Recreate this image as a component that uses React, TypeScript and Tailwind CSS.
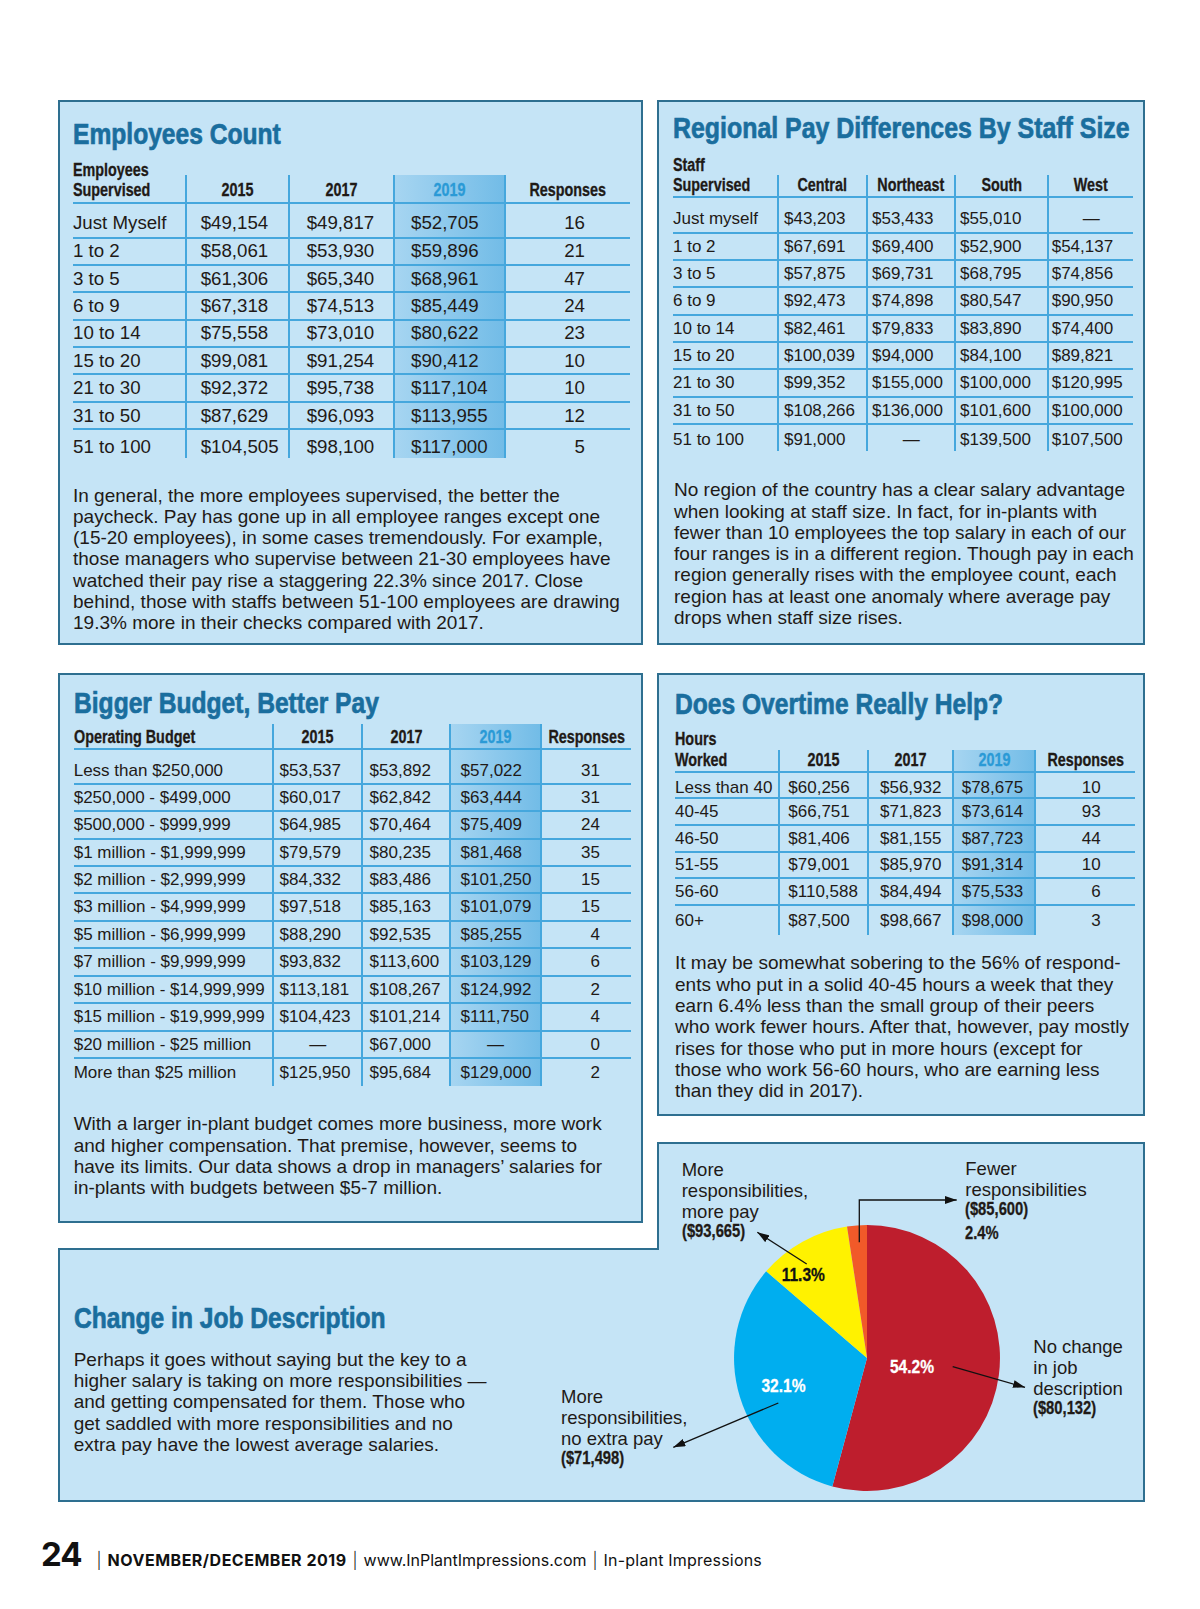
import React from 'react'

// Arial Narrow look: Liberation Sans Bold squeezed to 82%
const COND = 'inline-block scale-x-[0.82]'
const LINE = 'border-[#45a7dd]'
const HL = 'bg-linear-to-r from-[#a6d5f1] to-[#72bce7]'
const BOX = 'border-2 border-[#2e6f90] bg-[#c5e4f6]'
const TITLE = 'font-bold text-[30px] leading-[34px] text-[#1a6e9e] whitespace-nowrap overflow-hidden [-webkit-text-stroke:0.7px_currentColor]'
const PARA = 'text-[19px] leading-[21.3px] whitespace-nowrap'

interface TableSpec {
    widths: string[];
    pads: string[];
    aligns: string[];
    label: React.ReactNode;
    head: string[];
    headRow: string;
    headLabel: string;
    headCell: string;
    rows: string[][];
    hl: number;
    text: string;
    rowFirst: string;
    rowMid: string;
    rowLast: string;
    padFirst: string;
    padLast: string;
}

const Title = ({ children, sx = 'scale-x-[0.82]' }: { children: React.ReactNode; sx?: string }) => (
    <h2 className={TITLE}>
        <span className={`inline-block origin-left ${sx}`}>{children}</span>
    </h2>
)

const DataTable = ({ t }: { t: TableSpec }) => {
    return (
        <div className={t.text}>
            <div className={`flex items-end border-b-2 ${LINE} ${t.headRow}`}>
                <div className={`${t.widths[0]} ${t.headLabel} font-bold text-[17.5px] whitespace-nowrap [-webkit-text-stroke:0.3px_currentColor]`}>
                    <span className={`${COND} origin-left`}>{t.label}</span>
                </div>
                {t.head.map((h, i) => (
                    <div
                        key={h}
                        className={`${t.widths[i + 1]} ${t.headCell} border-l-2 ${LINE} ${i + 1 === t.hl ? `${HL} text-[#2a9ad6]` : ''} flex items-end justify-center font-bold text-[17.5px] whitespace-nowrap [-webkit-text-stroke:0.3px_currentColor]`}
                    >
                        <span className={COND}>{h}</span>
                    </div>
                ))}
            </div>
            {t.rows.map((r, ri) => {
                const first = ri === 0
                const last = ri === t.rows.length - 1
                return (
                    <div key={ri} className={`flex ${first ? t.rowFirst : last ? t.rowLast : t.rowMid} ${last ? '' : `border-b-2 ${LINE}`}`}>
                        {r.map((c, ci) => (
                            <div
                                key={ci}
                                className={`${t.widths[ci]} flex items-center whitespace-nowrap ${first ? t.padFirst : last ? t.padLast : ''} ${ci > 0 ? `border-l-2 ${LINE}` : ''} ${ci === t.hl ? HL : ''} ${c === '—' ? 'justify-center' : `${t.aligns[ci]} ${t.pads[ci]}`}`}
                            >
                                {c}
                            </div>
                        ))}
                    </div>
                )
            })}
        </div>
    )
}

const employees: TableSpec = {
    widths: ['w-[112px]', 'w-[103px]', 'w-[105px]', 'w-[111px]', 'w-[126px]'],
    pads: ['', 'pl-[13.7px]', 'pl-[16.7px]', 'pl-[16px]', 'pr-[45px]'],
    aligns: ['justify-start', 'justify-start', 'justify-start', 'justify-start', 'justify-end'],
    label: <>Employees<br />Supervised</>,
    head: ['2015', '2017', '2019', 'Responses'],
    headRow: 'mt-[9.3px]',
    headLabel: 'pb-[2px] leading-[20px]',
    headCell: 'h-[27px] pb-[2px] leading-[20px]',
    rows: [
        ['Just Myself', '$49,154', '$49,817', '$52,705', '16'],
        ['1 to 2', '$58,061', '$53,930', '$59,896', '21'],
        ['3 to 5', '$61,306', '$65,340', '$68,961', '47'],
        ['6 to 9', '$67,318', '$74,513', '$85,449', '24'],
        ['10 to 14', '$75,558', '$73,010', '$80,622', '23'],
        ['15 to 20', '$99,081', '$91,254', '$90,412', '10'],
        ['21 to 30', '$92,372', '$95,738', '$117,104', '10'],
        ['31 to 50', '$87,629', '$96,093', '$113,955', '12'],
        ['51 to 100', '$104,505', '$98,100', '$117,000', '5'],
    ],
    hl: 3,
    text: 'text-[18.7px]',
    rowFirst: 'h-[34.8px]',
    rowMid: 'h-[27.36px]',
    rowLast: 'h-[28px]',
    padFirst: 'pt-[6px]',
    padLast: 'pt-[5px]',
}

const regional: TableSpec = {
    widths: ['w-[104px]', 'w-[89px]', 'w-[88.3px]', 'w-[93px]', 'w-[85.7px]'],
    pads: ['', 'pl-[5px]', 'pl-[4px]', 'pl-[3.7px]', 'pl-[2.4px]'],
    aligns: ['justify-start', 'justify-start', 'justify-start', 'justify-start', 'justify-start'],
    label: <>Staff<br />Supervised</>,
    head: ['Central', 'Northeast', 'South', 'West'],
    headRow: 'mt-[9.7px]',
    headLabel: 'pb-[1.7px] leading-[20px]',
    headCell: 'h-[21.7px] pb-[1.7px] leading-[20px]',
    rows: [
        ['Just myself', '$43,203', '$53,433', '$55,010', '—'],
        ['1 to 2', '$67,691', '$69,400', '$52,900', '$54,137'],
        ['3 to 5', '$57,875', '$69,731', '$68,795', '$74,856'],
        ['6 to 9', '$92,473', '$74,898', '$80,547', '$90,950'],
        ['10 to 14', '$82,461', '$79,833', '$83,890', '$74,400'],
        ['15 to 20', '$100,039', '$94,000', '$84,100', '$89,821'],
        ['21 to 30', '$99,352', '$155,000', '$100,000', '$120,995'],
        ['31 to 50', '$108,266', '$136,000', '$101,600', '$100,000'],
        ['51 to 100', '$91,000', '—', '$139,500', '$107,500'],
    ],
    hl: -1,
    text: 'text-[17px]',
    rowFirst: 'h-[35.4px]',
    rowMid: 'h-[27.37px]',
    rowLast: 'h-[25.7px]',
    padFirst: 'pt-[6.6px]',
    padLast: 'pt-[4px]',
}

const budget: TableSpec = {
    widths: ['w-[198.7px]', 'w-[88.6px]', 'w-[88px]', 'w-[91px]', 'w-[90.6px]'],
    pads: ['', 'pl-[5.2px]', 'pl-[6.6px]', 'pl-[9.6px]', 'pr-[30.6px]'],
    aligns: ['justify-start', 'justify-start', 'justify-start', 'justify-start', 'justify-end'],
    label: 'Operating Budget',
    head: ['2015', '2017', '2019', 'Responses'],
    headRow: 'mt-[4.4px]',
    headLabel: 'pb-[1.3px] leading-[20px]',
    headCell: 'h-[24px] pb-[1.3px] leading-[20px]',
    rows: [
        ['Less than $250,000', '$53,537', '$53,892', '$57,022', '31'],
        ['$250,000 - $499,000', '$60,017', '$62,842', '$63,444', '31'],
        ['$500,000 - $999,999', '$64,985', '$70,464', '$75,409', '24'],
        ['$1 million - $1,999,999', '$79,579', '$80,235', '$81,468', '35'],
        ['$2 million - $2,999,999', '$84,332', '$83,486', '$101,250', '15'],
        ['$3 million - $4,999,999', '$97,518', '$85,163', '$101,079', '15'],
        ['$5 million - $6,999,999', '$88,290', '$92,535', '$85,255', '4'],
        ['$7 million - $9,999,999', '$93,832', '$113,600', '$103,129', '6'],
        ['$10 million - $14,999,999', '$113,181', '$108,267', '$124,992', '2'],
        ['$15 million - $19,999,999', '$104,423', '$101,214', '$111,750', '4'],
        ['$20 million - $25 million', '—', '$67,000', '—', '0'],
        ['More than $25 million', '$125,950', '$95,684', '$129,000', '2'],
    ],
    hl: 3,
    text: 'text-[17px]',
    rowFirst: 'h-[34.7px]',
    rowMid: 'h-[27.43px]',
    rowLast: 'h-[27.4px]',
    padFirst: 'pt-[8.6px]',
    padLast: '',
}

const overtime: TableSpec = {
    widths: ['w-[103.3px]', 'w-[88.4px]', 'w-[85.6px]', 'w-[82px]', 'w-[100.7px]'],
    pads: ['', 'pl-[8px]', 'pl-[11.3px]', 'pl-[7.4px]', 'pr-[34.3px]'],
    aligns: ['justify-start', 'justify-start', 'justify-start', 'justify-start', 'justify-end'],
    label: <>Hours<br />Worked</>,
    head: ['2015', '2017', '2019', 'Responses'],
    headRow: 'mt-[7.7px]',
    headLabel: 'leading-[21px]',
    headCell: 'h-[21.3px] leading-[21px]',
    rows: [
        ['Less than 40', '$60,256', '$56,932', '$78,675', '10'],
        ['40-45', '$66,751', '$71,823', '$73,614', '93'],
        ['46-50', '$81,406', '$81,155', '$87,723', '44'],
        ['51-55', '$79,001', '$85,970', '$91,314', '10'],
        ['56-60', '$110,588', '$84,494', '$75,533', '6'],
        ['60+', '$87,500', '$98,667', '$98,000', '3'],
    ],
    hl: 3,
    text: 'text-[17px]',
    rowFirst: 'h-[26.4px]',
    rowMid: 'h-[26.58px]',
    rowLast: 'h-[29.7px]',
    padFirst: 'pt-[4.4px]',
    padLast: '',
}

const Lines = ({ lines }: { lines: string[] }) => (
    <>
        {lines.map((l, i) => (
            <React.Fragment key={i}>
                {l}
                {i < lines.length - 1 && <br />}
            </React.Fragment>
        ))}
    </>
)

const Amount = ({ children, extra = '' }: { children: React.ReactNode; extra?: string }) => (
    <div className={`w-max origin-left scale-x-[0.82] font-bold text-[18px] leading-[19px] [-webkit-text-stroke:0.3px_currentColor] ${extra}`}>{children}</div>
)

const PieChart = () => {
    // pie centre (329,220) r 133 in local coords
    return (
        <div className="absolute left-[478px] top-[-110px] w-[600px] h-[362px]">
            <svg width="600" height="362" className="absolute inset-0">
                <defs>
                    <marker id="ah" viewBox="0 0 12 8" refX="12" refY="4" markerWidth="12" markerHeight="8" markerUnits="userSpaceOnUse" orient="auto">
                        <path d="M0,0 L12,4 L0,8 z" fill="#111" />
                    </marker>
                </defs>
                <path d="M329,220 L329,87 A133,133 0 1 1 294.3,348.4 Z" fill="#be1e2d" />
                <path d="M329,220 L294.3,348.4 A133,133 0 0 1 228.2,133.3 Z" fill="#00aeef" />
                <path d="M329,220 L228.2,133.3 A133,133 0 0 1 309,88.5 Z" fill="#fff200" />
                <path d="M329,220 L309,88.5 A133,133 0 0 1 329,87 Z" fill="#f15a29" />
                <g stroke="#111" strokeWidth="1.3" fill="none">
                    <line x1="268.7" y1="126" x2="219.3" y2="94.3" markerEnd="url(#ah)" />
                    <polyline points="321.3,104.3 321.3,62 418.7,62" markerEnd="url(#ah)" />
                    <line x1="414.7" y1="228.7" x2="487" y2="249.3" markerEnd="url(#ah)" />
                    <line x1="240.3" y1="265" x2="135.3" y2="309.3" markerEnd="url(#ah)" />
                </g>
                <g fontFamily="'Liberation Sans', Arial, sans-serif" fontWeight="700" fontSize="19" textAnchor="middle" dominantBaseline="central" strokeWidth="0.3">
                    <text transform="translate(374 228) scale(0.82 1)" fill="#fff" stroke="#fff">54.2%</text>
                    <text transform="translate(245.5 247) scale(0.82 1)" fill="#fff" stroke="#fff">32.1%</text>
                    <text transform="translate(265.3 136.7) scale(0.82 1)" fill="#111" stroke="#111">11.3%</text>
                </g>
            </svg>
            <div className="absolute left-[143.7px] top-[20.5px] text-[18.5px] leading-[21px] whitespace-nowrap">
                More<br />responsibilities,<br />more pay
                <Amount>($93,665)</Amount>
            </div>
            <div className="absolute left-[427.3px] top-[19.8px] text-[18.5px] leading-[21px] whitespace-nowrap">
                Fewer<br />responsibilities
                <Amount>($85,600)</Amount>
                <Amount extra="mt-[4.7px]">2.4%</Amount>
            </div>
            <div className="absolute left-[495.3px] top-[197.2px] text-[18.5px] leading-[21px] whitespace-nowrap">
                No change<br />in job<br />description
                <Amount>($80,132)</Amount>
            </div>
            <div className="absolute left-[23px] top-[247.2px] text-[18.5px] leading-[21px] whitespace-nowrap">
                More<br />responsibilities,<br />no extra pay
                <Amount>($71,498)</Amount>
            </div>
        </div>
    )
}

const App = () => {
    return (
        <div className="w-[1200px] h-[1609px] bg-white text-[#1f1a17] font-['Liberation_Sans',Arial,sans-serif] overflow-hidden">
            <div className="pt-[100px] pl-[58px] w-[1145px]">
                <div className="flex gap-[14px]">
                    <section className={`${BOX} w-[585px] pl-[13px] pr-[11px] pt-[14.6px] pb-[9px]`}>
                        <Title>Employees Count</Title>
                        <DataTable t={employees} />
                        <p className={`${PARA} mt-[26.35px]`}>
                            <Lines lines={[
                                'In general, the more employees supervised, the better the',
                                'paycheck. Pay has gone up in all employee ranges except one',
                                '(15-20 employees), in some cases tremendously. For example,',
                                'those managers who supervise between 21-30 employees have',
                                'watched their pay rise a staggering 22.3% since 2017. Close',
                                'behind, those with staffs between 51-100 employees are drawing',
                                '19.3% more in their checks compared with 2017.',
                            ]} />
                        </p>
                    </section>
                    <section className={`${BOX} w-[488px] pl-[14px] pr-[10px] pt-[8.9px] pb-[14.5px]`}>
                        <Title sx="scale-x-[0.83]">Regional Pay Differences By Staff Size</Title>
                        <DataTable t={regional} />
                        <p className={`${PARA} mt-[28.35px] pl-[1px]`}>
                            <Lines lines={[
                                'No region of the country has a clear salary advantage',
                                'when looking at staff size. In fact, for in-plants with',
                                'fewer than 10 employees the top salary in each of our',
                                'four ranges is in a different region. Though pay in each',
                                'region generally rises with the employee count, each',
                                'region has at least one anomaly where average pay',
                                'drops when staff size rises.',
                            ]} />
                        </p>
                    </section>
                </div>

                <div className="mt-[28px] flex gap-[14px]">
                    <section className={`${BOX} w-[585px] pl-[13.7px] pr-[10.4px] pt-[10.9px] pb-[23px]`}>
                        <Title>Bigger Budget, Better Pay</Title>
                        <DataTable t={budget} />
                        <p className={`${PARA} mt-[26.95px]`}>
                            <Lines lines={[
                                'With a larger in-plant budget comes more business, more work',
                                'and higher compensation. That premise, however, seems to',
                                'have its limits. Our data shows a drop in managers’ salaries for',
                                'in-plants with budgets between $5-7 million.',
                            ]} />
                        </p>
                    </section>
                    <div className="w-[488px] flex flex-col">
                        <section className={`${BOX} pl-[16px] pr-[8px] pt-[12.6px] pb-[13px]`}>
                            <Title>Does Overtime Really Help?</Title>
                            <DataTable t={overtime} />
                            <p className={`${PARA} mt-[16.95px]`}>
                                <Lines lines={[
                                    'It may be somewhat sobering to the 56% of respond-',
                                    'ents who put in a solid 40-45 hours a week that they',
                                    'earn 6.4% less than the small group of their peers',
                                    'who work fewer hours. After that, however, pay mostly',
                                    'rises for those who put in more hours (except for',
                                    'those who work 56-60 hours, who are earning less',
                                    'than they did in 2017).',
                                ]} />
                            </p>
                        </section>
                        <div className="mt-[26px] mb-[-25px] flex-1 border-2 border-b-0 border-[#2e6f90] bg-[#c5e4f6]" />
                    </div>
                </div>

                <section className="mt-[25px] h-[254px] relative flex border-2 border-t-0 border-[#2e6f90] bg-[#c5e4f6]">
                    <div className="w-[599px] border-t-2 border-[#2e6f90] pl-[13.7px] pt-[50.9px]">
                        <Title>Change in Job Description</Title>
                        <p className={`${PARA} mt-[13.45px]`}>
                            <Lines lines={[
                                'Perhaps it goes without saying but the key to a',
                                'higher salary is taking on more responsibilities —',
                                'and getting compensated for them. Those who',
                                'get saddled with more responsibilities and no',
                                'extra pay have the lowest average salaries.',
                            ]} />
                        </p>
                    </div>
                    <PieChart />
                </section>
            </div>

            <footer className="mt-[32px] pl-[41px] flex items-baseline whitespace-nowrap font-['Inter',sans-serif] text-[#111]">
                <span className="text-[33px] font-bold leading-[40px] tracking-[-1px]">24</span>
                <span className="ml-[15px] text-[16px] font-light">|</span>
                <span className="ml-[6px] text-[16px] font-bold tracking-[0.5px]">NOVEMBER/DECEMBER 2019</span>
                <span className="ml-[6px] text-[16px] font-light">|</span>
                <span className="ml-[6px] text-[16px]">www.InPlantImpressions.com</span>
                <span className="ml-[6px] text-[16px] font-light">|</span>
                <span className="ml-[6px] text-[16px] tracking-[0.2px]">In-plant Impressions</span>
            </footer>
        </div>
    )
}

export default App
